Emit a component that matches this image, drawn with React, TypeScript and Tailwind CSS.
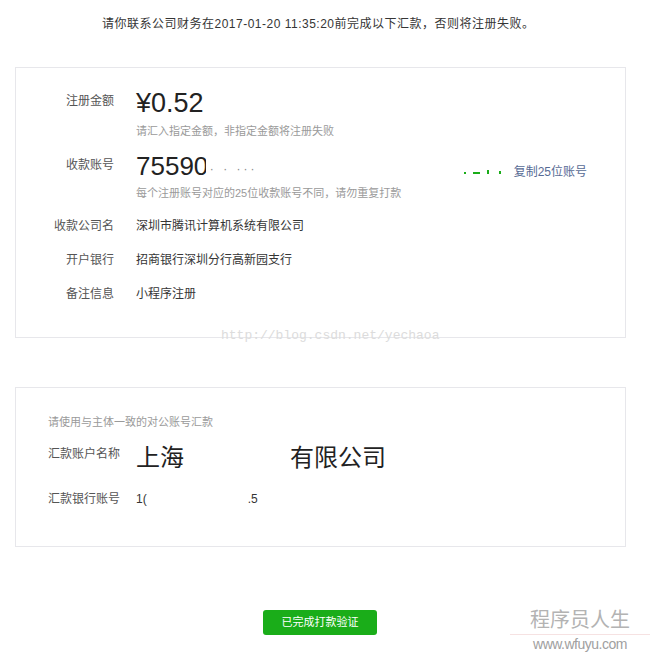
import React from 'react'

const font = { fontFamily: '"Liberation Sans", "Noto Sans CJK SC", sans-serif' }

function InfoRow({ label, value }: { label: string; value: string }) {
  return (
    <div className="flex items-start">
      <span className="w-[98px] shrink-0 text-right text-[12px] leading-[20px] text-[#555]">{label}</span>
      <span className="ml-[22px] text-[12px] leading-[20px] text-[#353535]">{value}</span>
    </div>
  )
}

export default function App() {
  return (
    <div className="relative w-[650px] h-[654px] bg-white overflow-hidden" style={font}>
      {/* notice */}
      <p className="pt-[14px] pl-[102px] text-[12px] leading-[20px] tracking-[0.5px] text-[#353535] whitespace-nowrap">
        请你联系公司财务在2017-01-20 11:35:20前完成以下汇款，否则将注册失败。
      </p>

      {/* payment info card */}
      <div className="relative mt-[33px] ml-[15px] w-[611px] border border-[#e7e7eb] pt-[19px] pb-[33px] pr-[38px]">
        <div className="flex items-start">
          <span className="mt-[4px] w-[98px] shrink-0 text-right text-[12px] leading-[20px] text-[#555]">注册金额</span>
          <div className="ml-[22px] flex flex-col">
            <span className="text-[27px] leading-[32px] text-[#222]">¥0.52</span>
            <span className="mt-[4px] text-[11px] leading-[16px] text-[#9a9a9a]">请汇入指定金额，非指定金额将注册失败</span>
          </div>
        </div>

        <div className="mt-[11px] flex items-start">
          <span className="mt-[5px] w-[98px] shrink-0 text-right text-[12px] leading-[20px] text-[#555]">收款账号</span>
          <div className="ml-[22px] flex flex-1 flex-col">
            <div className="flex items-center justify-between">
              <div className="flex items-center">
                <span className="text-[26px] leading-[32px] text-[#222]">7559</span>
                <span className="inline-block w-[12px] overflow-hidden text-[26px] leading-[32px] text-[#222]">0</span>
                <span className="ml-[4px] mt-[6px] text-[12px] tracking-[3px] text-[#888]">· · ···</span>
              </div>
              <div className="mt-[12px] flex items-center">
                <div className="mr-[13px] flex items-end gap-[7px]">
                  <span className="h-[2px] w-[2px] bg-[#1aad19]" />
                  <span className="h-[2px] w-[7px] bg-[#1aad19]" />
                  <span className="h-[4px] w-[2px] bg-[#1aad19]" />
                  <span className="ml-[3px] h-[3px] w-[2px] bg-[#1aad19]" />
                </div>
                <span className="text-[12px] leading-[20px] text-[#576b95]">复制25位账号</span>
              </div>
            </div>
            <span className="mt-[3px] text-[11px] leading-[16px] text-[#9a9a9a]">每个注册账号对应的25位收款账号不同，请勿重复打款</span>
          </div>
        </div>

        <div className="mt-[15px] flex flex-col gap-[14px]">
          <InfoRow label="收款公司名" value="深圳市腾讯计算机系统有限公司" />
          <InfoRow label="开户银行" value="招商银行深圳分行高新园支行" />
          <InfoRow label="备注信息" value="小程序注册" />
        </div>

        <span
          className="absolute left-[205px] bottom-[-8px] text-[13px] leading-[18px] text-[#dcdcdc] whitespace-nowrap"
          style={{ fontFamily: '"Liberation Mono", monospace' }}
        >
          http://blog.csdn.net/yechaoa
        </span>
      </div>

      {/* payer card */}
      <div className="mt-[49px] ml-[15px] w-[611px] border border-[#e7e7eb] pt-[26px] pb-[37px] pl-[32px]">
        <p className="text-[11px] leading-[16px] text-[#9a9a9a]">请使用与主体一致的对公账号汇款</p>
        <div className="mt-[12px] flex items-start">
          <span className="mt-[2px] w-[88px] shrink-0 text-[12px] leading-[20px] text-[#555]">汇款账户名称</span>
          <div className="flex items-center text-[24px] leading-[32px] text-[#222]">
            <span>上海</span>
            <span className="w-[106px]" />
            <span>有限公司</span>
          </div>
        </div>
        <div className="mt-[15px] flex items-start">
          <span className="w-[88px] shrink-0 text-[12px] leading-[20px] text-[#555]">汇款银行账号</span>
          <span className="text-[12px] leading-[20px] text-[#353535]">1(</span>
          <span className="ml-[101px] text-[12px] leading-[20px] text-[#353535]">.5</span>
        </div>
      </div>

      {/* action */}
      <div className="mt-[63px] flex justify-center">
        <button className="ml-[-10px] h-[25px] w-[114px] rounded-[3px] bg-[#1aad19] text-[11px] text-white">
          已完成打款验证
        </button>
      </div>

      {/* site watermark */}
      <div className="absolute right-0 top-[607px] flex w-[140px] flex-col items-center">
        <span className="text-[20px] leading-[26px] text-[#b3b3b3]">程序员人生</span>
        <span className="mt-[1px] h-[1px] w-[140px] bg-[#f6e2e2]" />
        <span className="text-[14px] leading-[18px] tracking-[-0.5px] text-[#a0a0a0]">www.wfuyu.com</span>
      </div>
    </div>
  )
}
